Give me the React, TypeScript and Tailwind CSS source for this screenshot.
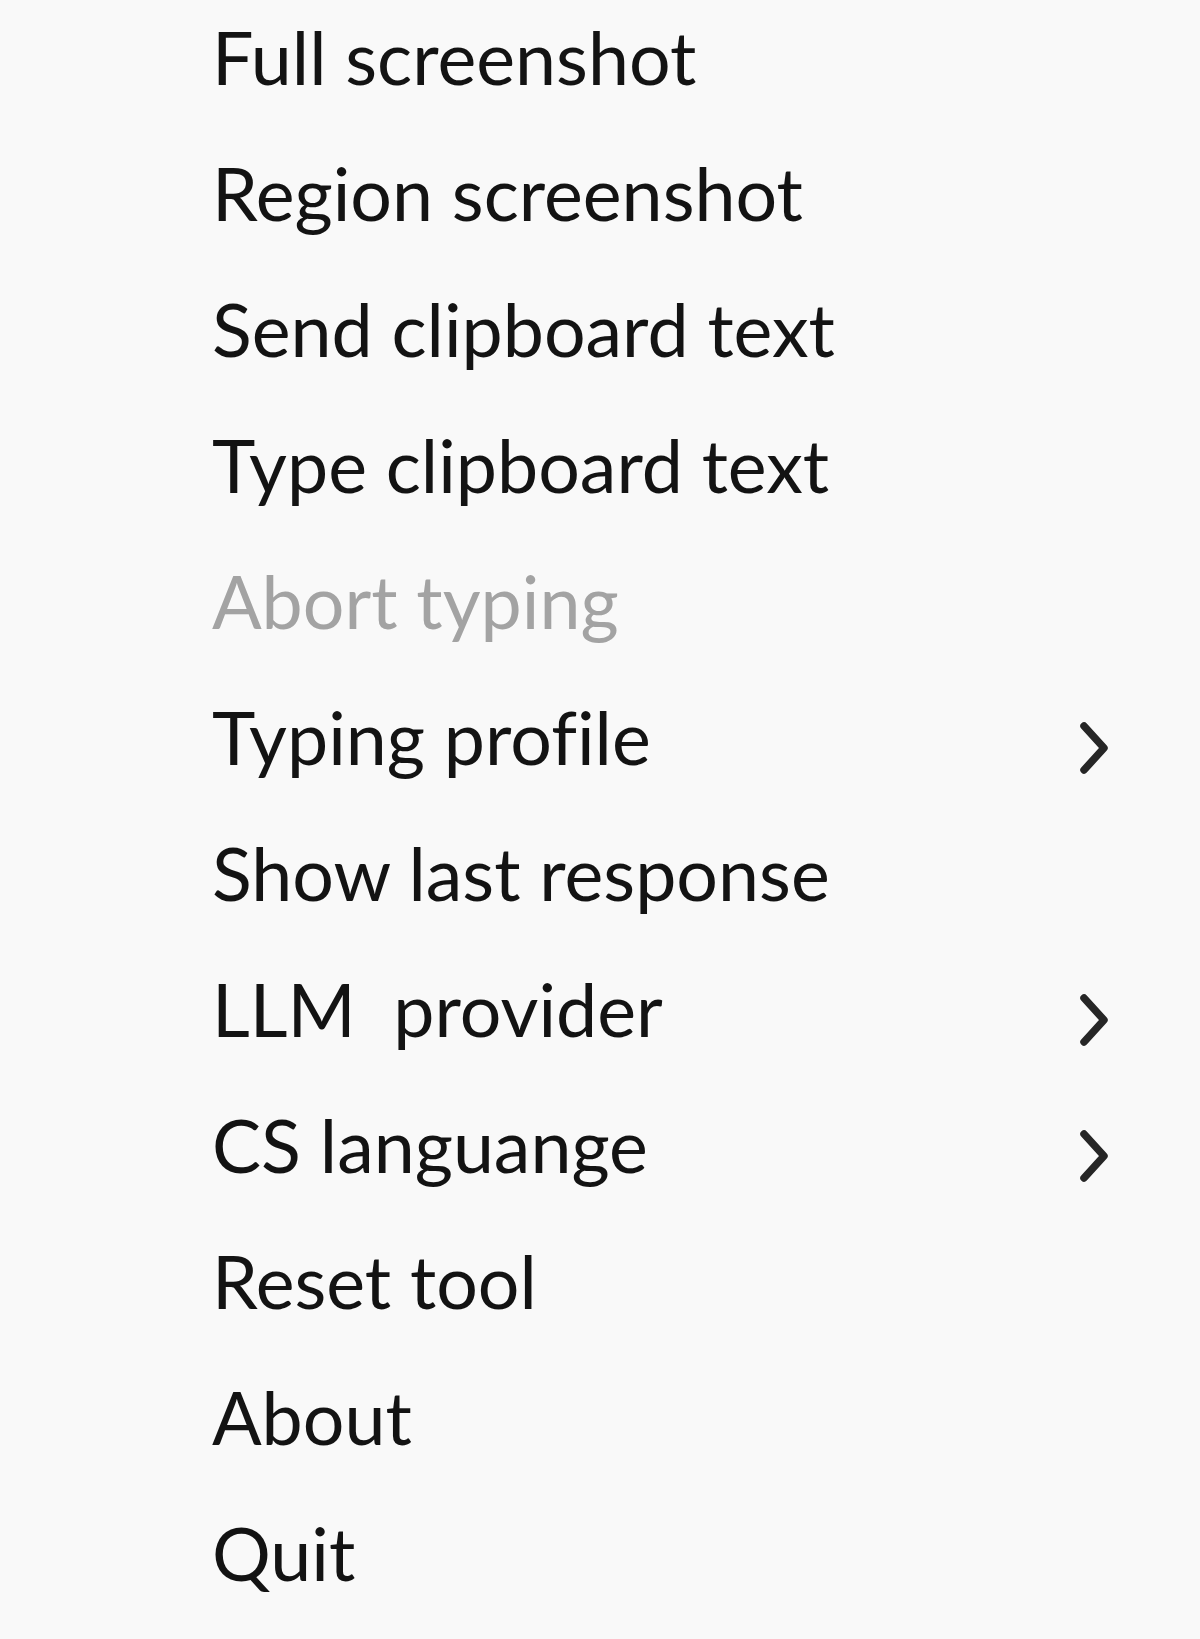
import { Fragment } from "react";

type MenuItem = {
  label: string;
  disabled?: boolean;
  submenu?: boolean;
};

const items: MenuItem[] = [
  { label: "Full screenshot" },
  { label: "Region screenshot" },
  { label: "Send clipboard text" },
  { label: "Type clipboard text" },
  { label: "Abort typing", disabled: true },
  { label: "Typing profile", submenu: true },
  { label: "Show last response" },
  { label: "LLM  provider", submenu: true },
  { label: "CS languange", submenu: true },
  { label: "Reset tool" },
  { label: "About" },
  { label: "Quit" },
];

function Chevron() {
  return (
    <svg
      width="36"
      height="56"
      viewBox="0 0 36 56"
      fill="none"
      className="shrink-0"
      aria-hidden
    >
      <polyline
        points="8,6 28,28 8,50"
        stroke="#262626"
        strokeWidth="7.5"
        strokeLinecap="round"
        strokeLinejoin="round"
      />
    </svg>
  );
}

export default function App() {
  return (
    <div className="h-[1639px] w-full overflow-hidden bg-[#f9f9f9] font-['Lato',sans-serif] [font-variant-ligatures:none]">
      <ul className="flex flex-col">
        {items.map((item) => (
          <Fragment key={item.label}>
            <li className="flex h-[136px] items-center pl-[212px] pr-[88px]">
              <span
                className={`mb-[23px] whitespace-pre text-[73.5px] leading-none ${
                  item.disabled ? "text-[#a3a3a3]" : "text-[#131313]"
                }`}
              >
                {item.label}
              </span>
              {item.submenu && (
                <span className="ml-auto flex">
                  <Chevron />
                </span>
              )}
            </li>
          </Fragment>
        ))}
      </ul>
    </div>
  );
}
